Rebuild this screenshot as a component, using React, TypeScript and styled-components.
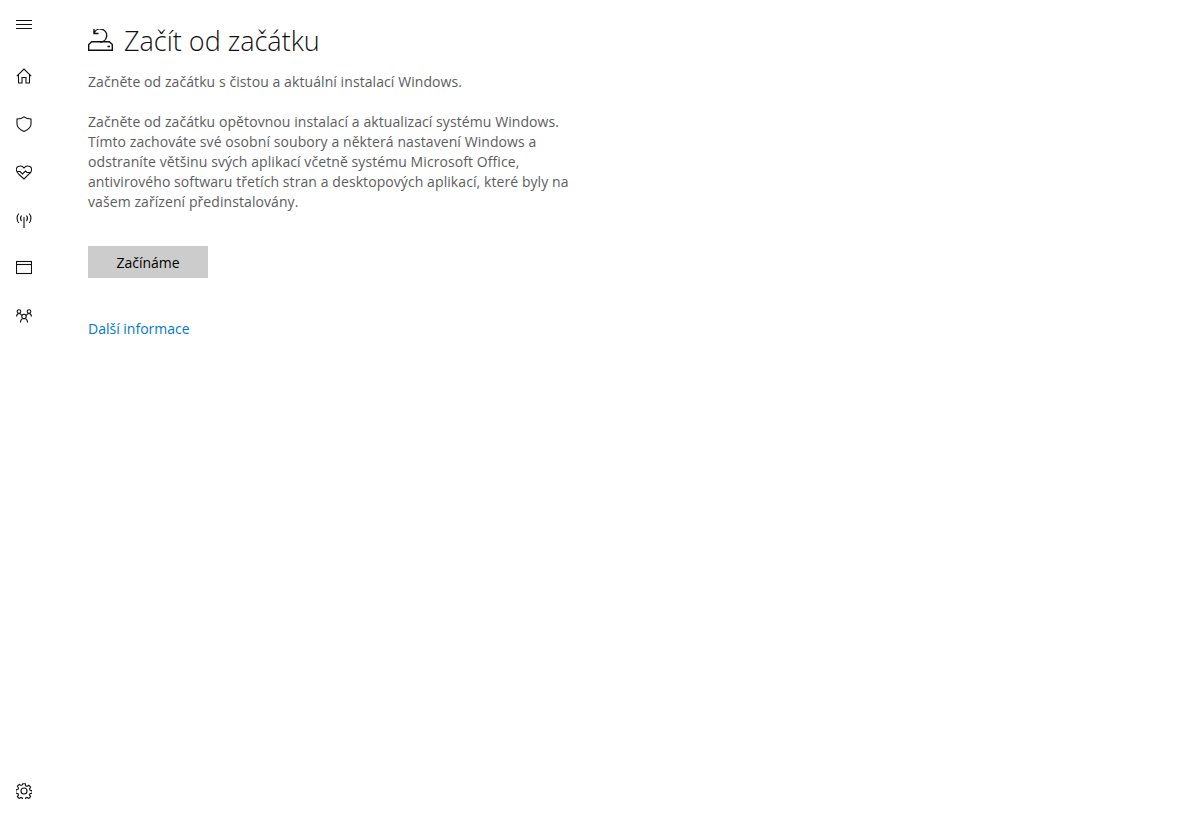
import React from 'react';
import styled, { createGlobalStyle } from 'styled-components';

const GlobalStyle = createGlobalStyle`
  html, body {
    margin: 0;
    height: 100%;
    background: #fff;
  }
  #root {
    height: 100%;
  }
`;

const Page = styled.div`
  display: flex;
  height: 821px;
  overflow: hidden;
  font-family: "Open Sans", "Noto Sans", sans-serif;
  font-size: 14px;
`;

const Sidebar = styled.nav`
  width: 48px;
  flex: none;
  display: flex;
  flex-direction: column;
  padding-bottom: 6px;
  box-sizing: border-box;
`;

const NavButton = styled.div<{ $top?: number }>`
  width: 48px;
  height: 48px;
  flex: none;
  display: flex;
  align-items: center;
  justify-content: center;
  margin-top: ${(p) => p.$top ?? 0}px;
`;

const Spacer = styled.div`
  flex: 1;
`;

const Main = styled.main`
  margin-left: 40px;
  padding-top: 21px;
  width: 490px;
`;

const TitleRow = styled.div`
  display: flex;
  align-items: center;
  gap: 10px;
  height: 40px;
`;

const Title = styled.h1`
  margin: 0;
  font-size: 27px;
  font-weight: 300;
  color: #111;
  line-height: 40px;
  white-space: nowrap;
`;

const Paragraph = styled.p<{ $top: number }>`
  margin: ${(p) => p.$top}px 0 0;
  color: #5d5d5d;
  line-height: 20px;
  white-space: nowrap;
  letter-spacing: 0.08px;
`;

const Button = styled.button`
  display: block;
  margin-top: 34px;
  width: 120px;
  height: 32px;
  padding: 0;
  border: 0;
  background: #cccccc;
  color: #000;
  font: inherit;
`;

const InfoLink = styled.a`
  display: block;
  margin-top: 41px;
  color: #0078d7;
  line-height: 20px;
  text-decoration: none;
`;

const Icon = styled.svg.attrs({
  viewBox: '0 0 16 16',
  width: 16,
  height: 16,
  fill: 'none',
  stroke: '#111',
  strokeWidth: 1.1,
})`
  display: block;
`;

const TitleIcon = styled.svg.attrs({
  viewBox: '0 0 26 24',
  width: 26,
  height: 24,
  fill: 'none',
  stroke: '#111',
  strokeWidth: 1.4,
})`
  display: block;
  flex: none;
`;

export default function App() {
  return (
    <>
      <GlobalStyle />
      <Page>
        <Sidebar>
          <NavButton>
            <Icon><path d="M0 4.500h16M0 8.500h16M0 12.500h16" /></Icon>
          </NavButton>
          <NavButton $top={4}>
            <Icon><path d="M.8 8.200 8 1l7.200 7.200M2.500 7v8h3.500V9.500h4V15h3.500V7" /></Icon>
          </NavButton>
          <NavButton>
            <Icon><path d="M8 .8c1.800 1.500 4.400 2.200 7 2.200v5c0 3.500-3 5.800-7 7.400-4-1.600-7-3.900-7-7.400V3c2.600 0 5.200-.7 7-2.200z" /></Icon>
          </NavButton>
          <NavButton>
            <Icon><path d="M3 10.500 1.300 8.300C-.2 6 0 3.500 2.200 2.500 4.500 1.500 7 2.600 8 4c1-1.400 3.500-2.500 5.800-1.500 2.200 1 2.400 3.500.9 5.800L8 15l-5-4.500zM.8 7.500H4l2.500 2.500 3-3 1.500 1.500h4.200" /></Icon>
          </NavButton>
          <NavButton>
            <Icon><path d="M8 5v11M5.500 3.500c-1.200 1.600-1.200 3.900 0 5.500M10.500 3.500c1.200 1.600 1.200 3.900 0 5.500M2.800 1.500C.5 4 .5 8.500 2.800 11M13.200 1.500c2.300 2.500 2.300 7 0 9.500" /></Icon>
          </NavButton>
          <NavButton>
            <Icon><rect x=".5" y="1.500" width="15" height="12" /><path d="M.5 4.500h15" /></Icon>
          </NavButton>
          <NavButton>
            <Icon>
              <circle cx="3" cy="3.500" r="1.800" />
              <circle cx="13" cy="3.500" r="1.800" />
              <circle cx="8" cy="8.500" r="2.200" />
              <path d="M.5 8.500c.2-1.800 1.200-3 2.500-3s2.200.7 2.800 2M15.500 8.500c-.2-1.800-1.200-3-2.500-3s-2.200.7-2.800 2M4.500 14.500c0-2.500 1.500-4 3.500-4s3.500 1.500 3.500 4" />
            </Icon>
          </NavButton>
          <Spacer />
          <NavButton>
            <Icon>
              <circle cx="8" cy="8" r="3" />
              <path d="M6.700.8h2.600l.4 2 1.300.6 1.800-1.100 1.800 1.800-1.100 1.800.6 1.300 2 .4v2.600l-2 .4-.6 1.300 1.100 1.800-1.800 1.800-1.800-1.100-1.300.6-.4 2H6.700l-.4-2-1.300-.6-1.800 1.100-1.800-1.800 1.100-1.800-.6-1.300-2-.4V6.700l2-.4.6-1.300-1.100-1.800 1.800-1.800 1.800 1.100 1.300-.6z" />
            </Icon>
          </NavButton>
        </Sidebar>
        <Main>
          <TitleRow>
            <TitleIcon>
              <path d="M.7 21.300V15.500l3-2.800h17.600l3 2.800v5.800zM19.500 17.500h2.500" />
              <path d="M6.300 3.700A6.500 6.500 0 1 1 12 13M6 0v4.500h4.500" />
            </TitleIcon>
            <Title>Začít od začátku</Title>
          </TitleRow>
          <Paragraph $top={11}>Začněte od začátku s čistou a aktuální instalací Windows.</Paragraph>
          <Paragraph $top={20}>
            Začněte od začátku opětovnou instalací a aktualizací systému Windows.<br />
            Tímto zachováte své osobní soubory a některá nastavení Windows a<br />
            odstraníte většinu svých aplikací včetně systému Microsoft Office,<br />
            antivirového softwaru třetích stran a desktopových aplikací, které byly na<br />
            vašem zařízení předinstalovány.
          </Paragraph>
          <Button>Začínáme</Button>
          <InfoLink href="#">Další informace</InfoLink>
        </Main>
      </Page>
    </>
  );
}
